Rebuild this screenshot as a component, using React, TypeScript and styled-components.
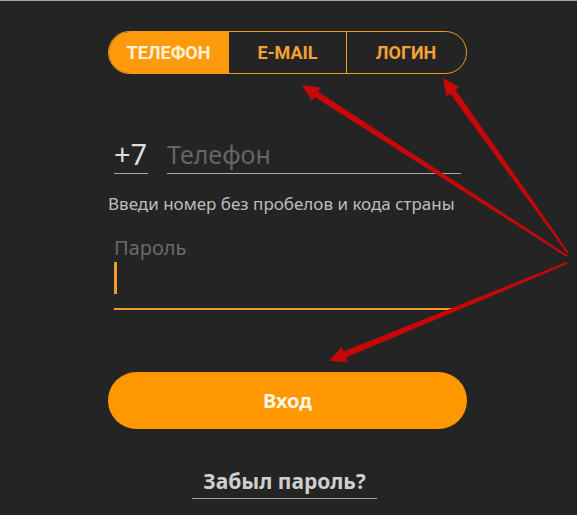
import React from "react";
import styled, { createGlobalStyle } from "styled-components";

const Global = createGlobalStyle`
  html, body { margin: 0; padding: 0; background: #242424; }
  body { font-family: "Noto Sans", "Open Sans", sans-serif; }
  #root { min-height: 515px; }
`;

const Page = styled.div`
  position: relative;
  width: 577px;
  height: 515px;
  overflow: hidden;
  background: #242424;
  border-top: 1px solid #9aa2ae;
  box-sizing: border-box;
`;

const Form = styled.div`
  width: 359px;
  margin-left: 108px;
  padding-top: 30px;
  display: flex;
  flex-direction: column;
`;

const Tabs = styled.div`
  display: flex;
  height: 43px;
  border: 1.5px solid #f49a1e;
  border-radius: 22px;
  overflow: hidden;
  box-sizing: border-box;
`;

const Tab = styled.div<{ $active?: boolean; $w: number }>`
  width: ${(p) => p.$w}px;
  flex: none;
  display: flex;
  align-items: center;
  justify-content: center;
  box-sizing: border-box;
  font-family: Roboto, "Liberation Sans", sans-serif;
  font-weight: 700;
  font-size: 18px;
  background: ${(p) => (p.$active ? "#ff9a0c" : "transparent")};
  color: ${(p) => (p.$active ? "#fff0d6" : "#f5a235")};
  & + & { border-left: 1.5px solid #f49a1e; }
`;

const PhoneRow = styled.div`
  display: flex;
  align-items: flex-end;
  margin-top: 65px;
  padding-left: 6px;
`;

const Field = styled.div<{ $w: number; $ml?: number; $color: string; $size: number }>`
  width: ${(p) => p.$w}px;
  margin-left: ${(p) => p.$ml ?? 0}px;
  flex: none;
  font-size: ${(p) => p.$size}px;
  line-height: 30px;
  padding-bottom: 4px;
  color: ${(p) => p.$color};
  border-bottom: 1.5px solid #a8a8a8;
  white-space: nowrap;
`;

const Hint = styled.div`
  margin-top: 19px;
  font-size: 17px;
  line-height: 22px;
  color: #bdbdbd;
  white-space: nowrap;
`;

const PassBlock = styled.div`
  margin-top: 19px;
  margin-left: 6px;
  width: 341px;
  border-bottom: 2.5px solid #f09a2e;
  padding-bottom: 14px;
  display: flex;
  flex-direction: column;
`;

const PassLabel = styled.div`
  font-size: 20px;
  line-height: 28px;
  color: #6a6a6a;
`;

const Caret = styled.div`
  width: 3px;
  height: 32px;
  background: #f09a2e;
`;

const Button = styled.button`
  margin-top: 62px;
  height: 57px;
  border: none;
  border-radius: 29px;
  background: #ff9800;
  color: #fff5e6;
  font-family: "Noto Sans", "Open Sans", sans-serif;
  font-weight: 700;
  font-size: 20px;
  padding: 0;
  cursor: pointer;
`;

const Forgot = styled.div`
  align-self: center;
  margin-top: 38px;
  margin-left: -6px;
  font-size: 21px;
  font-weight: 700;
  line-height: 28px;
  color: #cfcfcf;
  padding: 0 11px 3px;
  border-bottom: 1.5px solid #a0a0a0;
`;

const Overlay = styled.svg`
  position: absolute;
  left: 0;
  top: 0;
  pointer-events: none;
`;

type Pt = [number, number];

function arrowPoints(tail: Pt, tip: Pt): string {
  const dx = tip[0] - tail[0];
  const dy = tip[1] - tail[1];
  const len = Math.hypot(dx, dy);
  const ux = dx / len;
  const uy = dy / len;
  const nx = -uy;
  const ny = ux;
  const headLen = 17;
  const headW = 8;
  const tailW = 1;
  const neckW = 3.3;
  const bx = tip[0] - ux * headLen;
  const by = tip[1] - uy * headLen;
  const pts: Pt[] = [
    [tail[0] + nx * tailW, tail[1] + ny * tailW],
    [bx + nx * neckW, by + ny * neckW],
    [bx + nx * headW, by + ny * headW],
    tip,
    [bx - nx * headW, by - ny * headW],
    [bx - nx * neckW, by - ny * neckW],
    [tail[0] - nx * tailW, tail[1] - ny * tailW],
  ];
  return pts.map((p) => `${p[0].toFixed(1)},${p[1].toFixed(1)}`).join(" ");
}

const arrows: { tail: Pt; tip: Pt }[] = [
  { tail: [567, 255], tip: [302, 84] },
  { tail: [568, 252], tip: [443, 77] },
  { tail: [567, 262], tip: [329, 360] },
];

export default function App() {
  return (
    <>
      <Global />
      <Page>
        <Form>
          <Tabs>
            <Tab $active $w={119}>ТЕЛЕФОН</Tab>
            <Tab $w={118}>E-MAIL</Tab>
            <Tab $w={119}>ЛОГИН</Tab>
          </Tabs>
          <PhoneRow>
            <Field $w={34} $size={29} $color="#dedede">+7</Field>
            <Field $w={294} $ml={19} $size={25} $color="#656565">Телефон</Field>
          </PhoneRow>
          <Hint>Введи номер без пробелов и кода страны</Hint>
          <PassBlock>
            <PassLabel>Пароль</PassLabel>
            <Caret />
          </PassBlock>
          <Button>Вход</Button>
          <Forgot>Забыл пароль?</Forgot>
        </Form>
        <Overlay width="577" height="515" viewBox="0 0 577 515">
          {arrows.map((a, i) => (
            <polygon key={i} points={arrowPoints(a.tail, a.tip)} fill="#c80808" />
          ))}
        </Overlay>
      </Page>
    </>
  );
}
